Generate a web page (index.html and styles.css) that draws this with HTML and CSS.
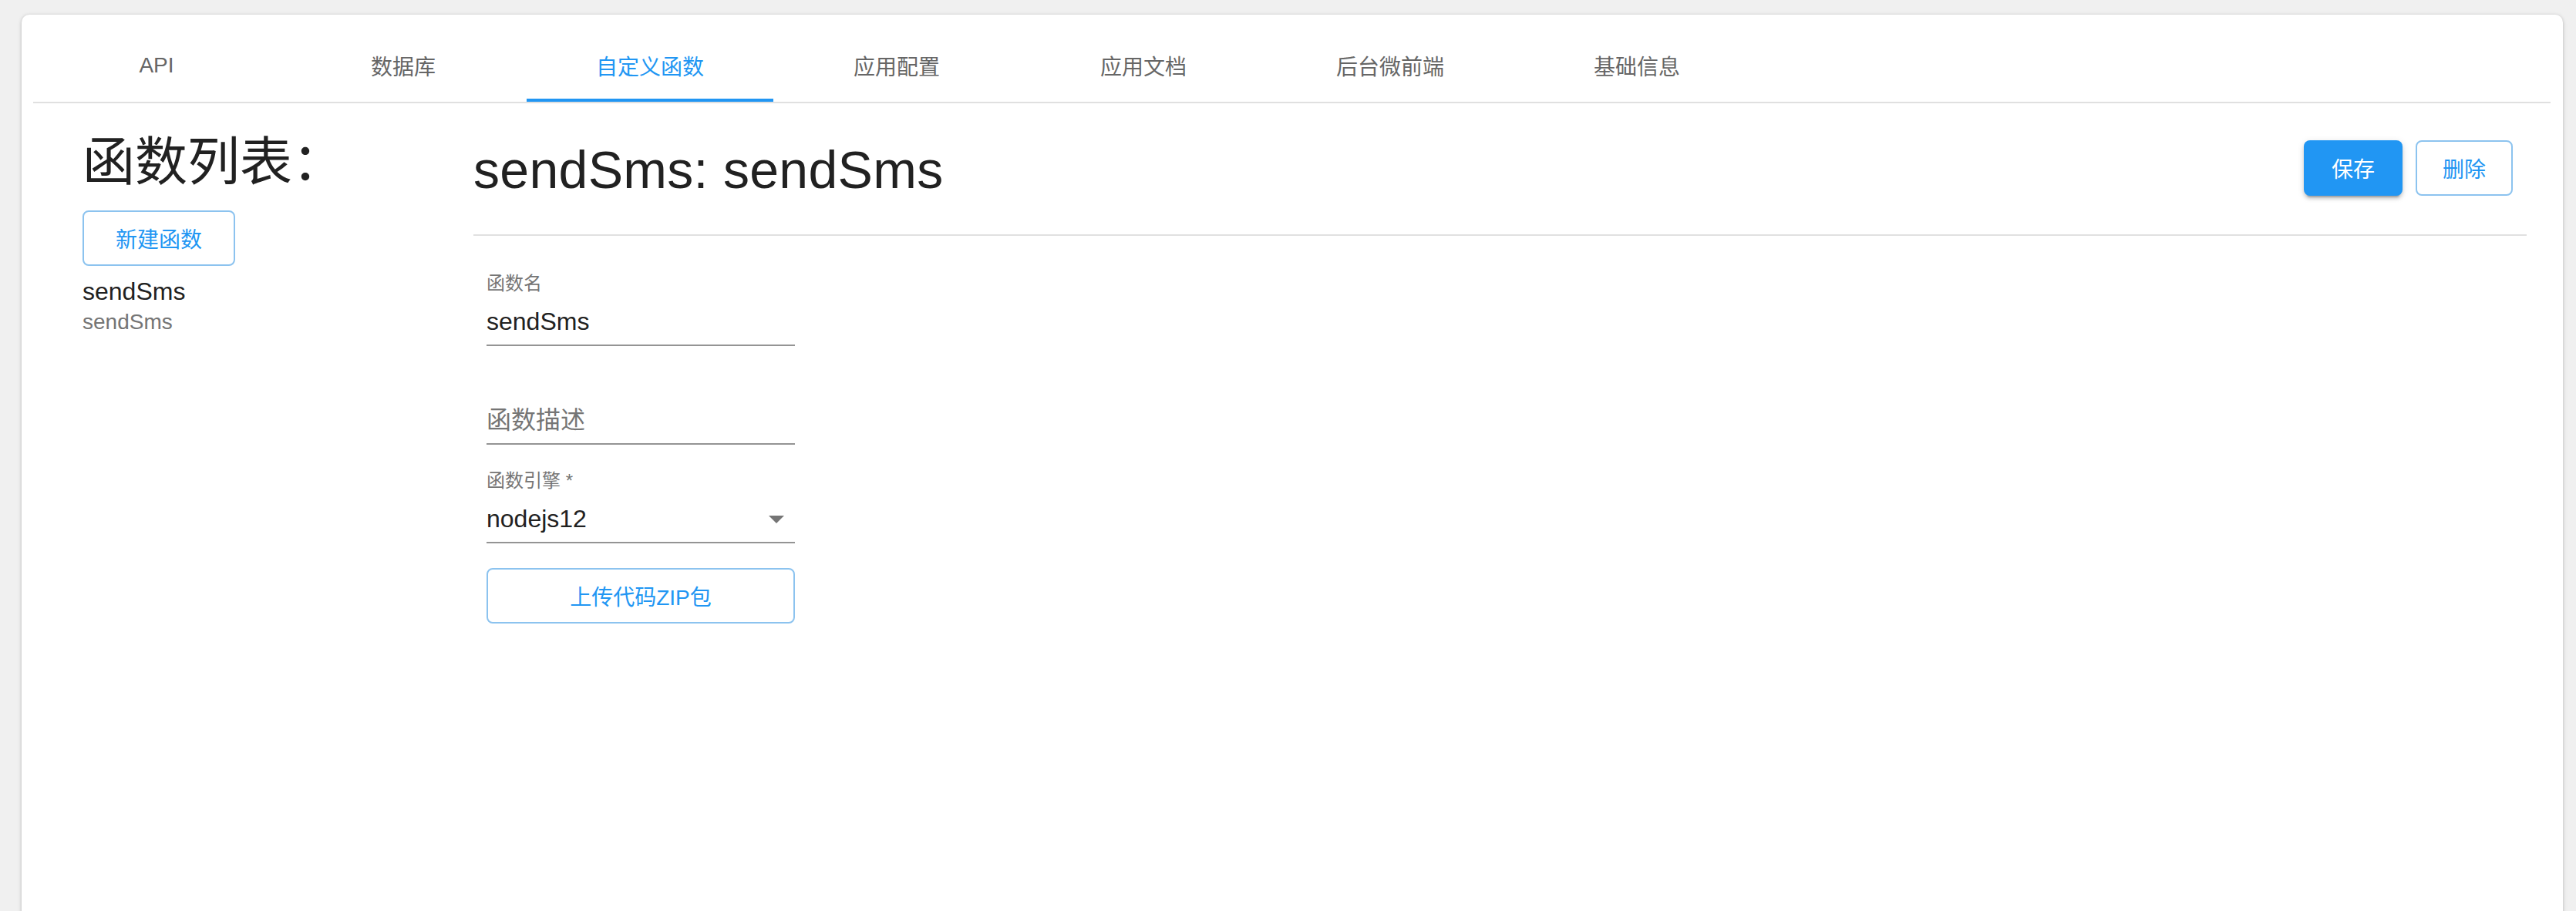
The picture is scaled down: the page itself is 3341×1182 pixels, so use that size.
FILE: index.html
```html
<!DOCTYPE html>
<html lang="zh-CN">
<head>
<meta charset="utf-8">
<title>自定义函数</title>
<link rel="stylesheet" href="styles.css">
</head>
<body>
<div class="card">
  <nav class="tabs">
    <div class="tab">API</div>
    <div class="tab">数据库</div>
    <div class="tab active">自定义函数</div>
    <div class="tab">应用配置</div>
    <div class="tab">应用文档</div>
    <div class="tab">后台微前端</div>
    <div class="tab">基础信息</div>
  </nav>
  <div class="content">
    <aside class="side">
      <h1 class="side-title">函数列表：</h1>
      <button class="btn btn-outline btn-new">新建函数</button>
      <div class="fn-item">
        <div class="fn-name">sendSms</div>
        <div class="fn-sub">sendSms</div>
      </div>
    </aside>
    <main class="main">
      <div class="main-head">
        <h2 class="main-title">sendSms: sendSms</h2>
        <div class="actions">
          <button class="btn btn-primary">保存</button>
          <button class="btn btn-outline btn-del">删除</button>
        </div>
      </div>
      <div class="divider"></div>
      <form class="form">
        <div class="field">
          <div class="label">函数名</div>
          <div class="value-row"><span class="value">sendSms</span></div>
          <div class="underline"></div>
        </div>
        <div class="field">
          <div class="label"></div>
          <div class="value-row"><span class="value placeholder">函数描述</span></div>
          <div class="underline"></div>
        </div>
        <div class="field">
          <div class="label">函数引擎 *</div>
          <div class="value-row">
            <span class="value">nodejs12</span>
            <svg class="arrow" viewBox="0 0 24 24" width="48" height="48"><path d="M7 10l5 5 5-5z" fill="#757575"/></svg>
          </div>
          <div class="underline"></div>
        </div>
        <button type="button" class="btn btn-outline btn-upload">上传代码ZIP包</button>
      </form>
    </main>
  </div>
</div>
</body>
</html>
```

FILE: styles.css
```css
html, body {
  margin: 0;
  padding: 0;
  background: #f0f0f0;
}
body {
  font-family: "Liberation Sans", "Noto Sans CJK SC", sans-serif;
  color: #212121;
  overflow: hidden;
}
.card {
  margin: 19px 17px 0 28px;
  min-height: 1250px;
  background: #fff;
  border-radius: 10px 10px 0 0;
  box-shadow: 0 2px 2px -1px rgba(0,0,0,.2), 0 1px 4px 0 rgba(0,0,0,.14), 0 1px 6px 0 rgba(0,0,0,.1);
  padding: 17px 16px 0 15px;
}
.tabs {
  display: flex;
  height: 96px;
  border-bottom: 2px solid #e0e0e0;
}
.tab {
  width: 320px;
  display: flex;
  align-items: center;
  justify-content: center;
  font-size: 28px;
  color: #666;
  box-sizing: border-box;
  padding-top: 2px;
}
.tab.active {
  color: #2196f3;
  border-bottom: 4px solid #2196f3;
  padding-top: 6px;
}
.content {
  display: flex;
  align-items: flex-start;
  padding: 0 31px 0 64px;
}
.side {
  width: 507px;
  flex: none;
  padding-top: 42px;
}
.side-title {
  margin: 0;
  font-size: 68px;
  line-height: 68px;
  font-weight: 400;
  color: #212121;
}
.btn {
  font-family: "Liberation Sans", "Noto Sans CJK SC", sans-serif;
  font-size: 28px;
  height: 72px;
  border-radius: 8px;
  box-sizing: border-box;
  cursor: pointer;
  padding: 0;
}
.btn-outline {
  background: #fff;
  border: 2px solid #8cc3ef;
  color: #2196f3;
}
.btn-primary {
  background: #2196f3;
  color: #fff;
  border: none;
  box-shadow: 0 6px 2px -4px rgba(0,0,0,.2), 0 4px 4px 0 rgba(0,0,0,.14), 0 2px 10px 0 rgba(0,0,0,.12);
}
.btn-new {
  display: block;
  width: 198px;
  margin-top: 29px;
}
.fn-item {
  margin-top: 11px;
}
.fn-name {
  font-size: 32px;
  line-height: 44px;
  color: #212121;
}
.fn-sub {
  font-size: 28px;
  line-height: 36px;
  color: #757575;
}
.main {
  flex: 1;
  padding-top: 48px;
}
.main-head {
  display: flex;
  align-items: center;
  justify-content: space-between;
  height: 72px;
  padding-right: 18px;
}
.main-title {
  margin: 0;
  font-size: 68px;
  line-height: 72px;
  font-weight: 400;
  letter-spacing: 0.3px;
  color: #212121;
  padding-top: 3px;
}
.actions {
  display: flex;
  gap: 17px;
}
.actions .btn-primary {
  width: 128px;
}
.btn-del {
  width: 126px;
}
.divider {
  height: 2px;
  background: #e0e0e0;
  margin-top: 50px;
}
.form {
  margin-top: 46px;
  padding-left: 17px;
  width: 400px;
}
.field {
  margin-bottom: 31px;
}
.label {
  height: 32px;
  font-size: 24px;
  line-height: 32px;
  color: #757575;
  margin-bottom: 13px;
}
.value-row {
  display: flex;
  align-items: center;
  justify-content: space-between;
  height: 40px;
  padding-bottom: 10px;
}
.value {
  font-size: 32px;
  line-height: 40px;
  color: #212121;
}
.value.placeholder {
  color: #757575;
}
.arrow {
  flex: none;
}
.underline {
  height: 2px;
  background: #949494;
}
.field:last-of-type {
  margin-bottom: 32px;
}
.btn-upload {
  display: block;
  width: 400px;
}
```
